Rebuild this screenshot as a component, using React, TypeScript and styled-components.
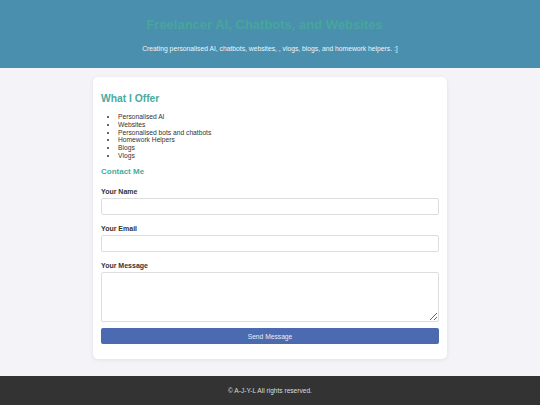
import React from 'react';
import styled, { createGlobalStyle } from 'styled-components';

const GlobalStyle = createGlobalStyle`
  html, body {
    margin: 0;
    padding: 0;
    background: #f3f3f8;
    font-family: "Liberation Sans", Arial, sans-serif;
    color: #333;
  }
`;

const Header = styled.header`
  background: #4a8fae;
  text-align: center;
  padding: 16px 20px 15px;
  height: 68px;
  box-sizing: border-box;
`;

const Title = styled.h1`
  margin: 0;
  padding-right: 11px;
  font-size: 13px;
  line-height: 18px;
  font-weight: bold;
  color: #46a69c;
`;

const Tagline = styled.p`
  margin: 10px 0 0;
  font-size: 6.75px;
  line-height: 9px;
  color: #eef6fa;
`;

const Main = styled.main`
  padding: 9px 0 17px;
`;

const Card = styled.section`
  width: 354px;
  margin: 0 auto;
  box-sizing: border-box;
  background: #fff;
  border-radius: 5px;
  box-shadow: 0 1px 4px rgba(0, 0, 0, 0.08);
  padding: 15px 8px 15px;
`;

const Heading = styled.h2<{ $size: number }>`
  margin: 0;
  font-size: ${(p) => p.$size}px;
  line-height: ${(p) => Math.round(p.$size + 3)}px;
  font-weight: bold;
  color: #4aab9f;
`;

const OfferList = styled.ul`
  margin: 8px 0 6.5px;
  padding-left: 17px;
  font-size: 6.7px;
  line-height: 7.75px;
  color: #333;
`;

const Form = styled.form`
  display: flex;
  flex-direction: column;
`;

const Label = styled.label`
  display: block;
  margin: 10px 0 2px;
  font-size: 7px;
  line-height: 8px;
  font-weight: bold;
  color: #333;
  &:first-child {
    margin-top: 11px;
  }
`;

const Input = styled.input`
  box-sizing: border-box;
  width: 100%;
  height: 17px;
  margin: 0;
  border: 1px solid #ddd;
  border-radius: 2px;
  font-size: 7px;
`;

const TextArea = styled.textarea`
  box-sizing: border-box;
  width: 100%;
  height: 50px;
  margin: 0;
  border: 1px solid #ddd;
  border-radius: 2px;
  font-size: 7px;
  display: block;
`;

const SendButton = styled.button`
  margin-top: 6px;
  height: 16px;
  width: 100%;
  border: none;
  border-radius: 2px;
  background: #4b6aaf;
  color: #e8ecf6;
  font-family: "Liberation Sans", Arial, sans-serif;
  font-size: 6.7px;
  cursor: pointer;
`;

const Footer = styled.footer`
  background: #333;
  height: 29px;
  display: flex;
  align-items: center;
  justify-content: center;
  font-size: 6.6px;
  color: #ddd;
`;

const offers = [
  'Personalised AI',
  'Websites',
  'Personalised bots and chatbots',
  'Homework Helpers',
  'Blogs',
  'Vlogs',
];

export default function App() {
  return (
    <>
      <GlobalStyle />
      <Header>
        <Title>Freelancer AI, Chatbots, and Websites</Title>
        <Tagline>Creating personalised AI, chatbots, websites, , vlogs, blogs, and homework helpers. :]</Tagline>
      </Header>
      <Main>
        <Card>
          <Heading $size={10.3}>What I Offer</Heading>
          <OfferList>
            {offers.map((o) => (
              <li key={o}>{o}</li>
            ))}
          </OfferList>
          <Heading $size={8}>Contact Me</Heading>
          <Form onSubmit={(e) => e.preventDefault()}>
            <Label htmlFor="name">Your Name</Label>
            <Input id="name" type="text" />
            <Label htmlFor="email">Your Email</Label>
            <Input id="email" type="email" />
            <Label htmlFor="message">Your Message</Label>
            <TextArea id="message" />
            <SendButton type="submit">Send Message</SendButton>
          </Form>
        </Card>
      </Main>
      <Footer>© A-J-Y-L All rights reserved.</Footer>
    </>
  );
}
